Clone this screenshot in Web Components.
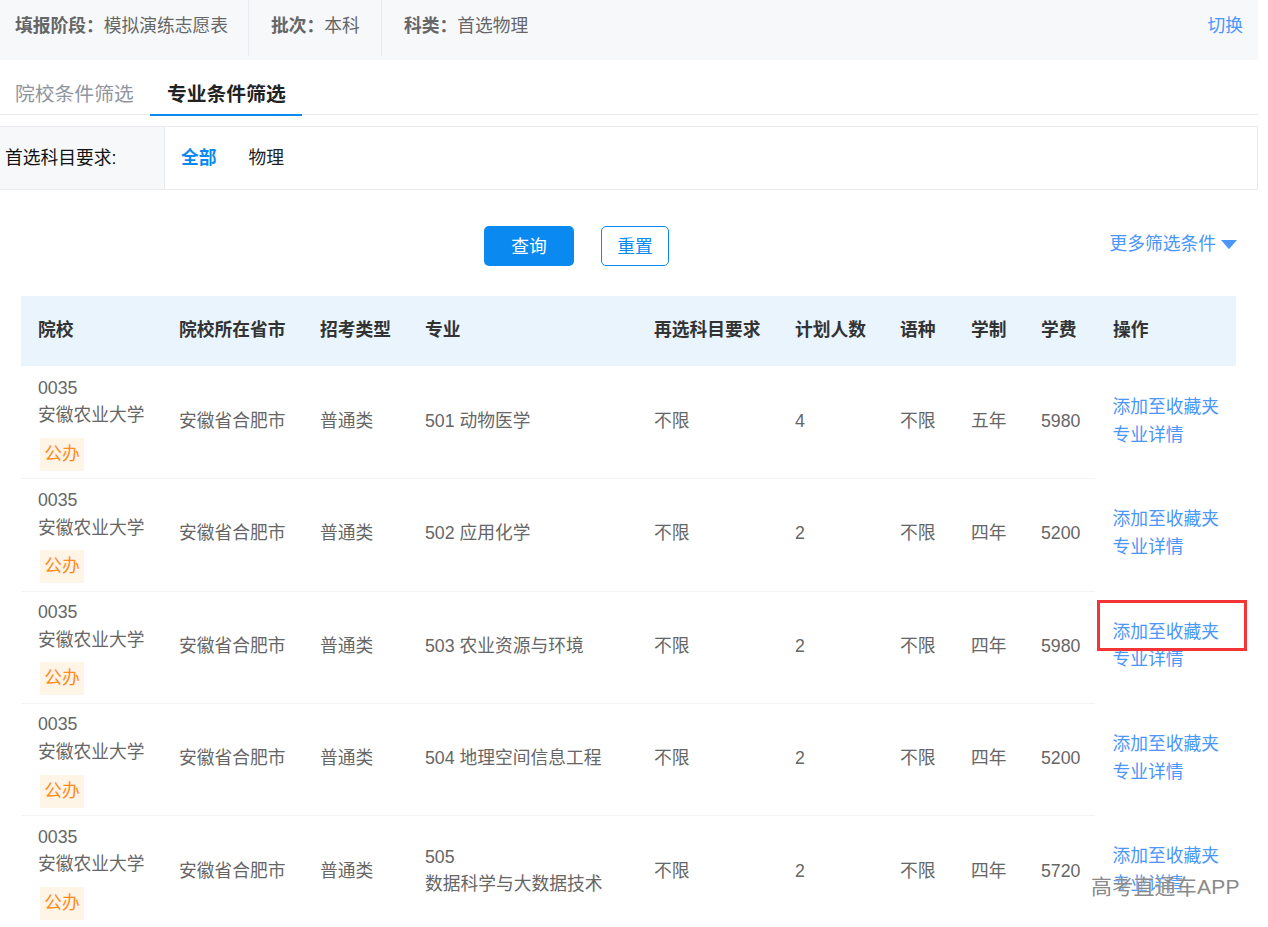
<!DOCTYPE html>
<html lang="zh">
<head>
<meta charset="utf-8">
<title>专业条件筛选</title>
<style>
  html, body { margin: 0; background: #fff; }
  body {
    position: relative;
    height: 927px;
    overflow: hidden;
    font-family: "Liberation Sans", "Noto Sans CJK SC", sans-serif;
    font-size: 17.75px;
    color: #666;
  }
</style>
</head>
<body>
<stage-bar></stage-bar>
<filter-tabs></filter-tabs>
<filter-row></filter-row>
<action-bar></action-bar>
<result-table></result-table>
<mark-box></mark-box>
<water-mark>高考直通车APP</water-mark>

<script>
const BLUE = '#0a8af0'
const LINK = '#4a96fa'

class StageBar extends HTMLElement {
  constructor() {
    super()
    this.attachShadow({ mode: 'open' })
    this.shadowRoot.innerHTML = `
      <style>
        :host { display: flex; width: 1258px; height: 60px; background: #f6f8fa; align-items: flex-start; }
        .item { display: flex; align-items: center; box-sizing: border-box; width: 249px; padding: 0 0 8px 15px; border-right: 1px solid #e8eaed; height: 56px; }
        .item + .item { width: 133px; padding-left: 22px; }
        .item.last { width: auto; border: 0; }
        b { color: #666; }
        a { margin-left: auto; margin-right: 15px; color: ${LINK}; line-height: 52px; }
      </style>
      <div class="item"><b>填报阶段：</b>模拟演练志愿表</div>
      <div class="item"><b>批次：</b>本科</div>
      <div class="item last"><b>科类：</b>首选物理</div>
      <a>切换</a>`
  }
}

class FilterTabs extends HTMLElement {
  constructor() {
    super()
    this.attachShadow({ mode: 'open' })
    this.shadowRoot.innerHTML = `
      <style>
        :host { display: flex; width: 1258px; height: 55px; box-sizing: border-box; border-bottom: 1px solid #e8eaed; font-size: 19.8px; }
        div { height: 56px; box-sizing: border-box; line-height: 68px; color: #8f959e; }
        .first { width: 150px; padding-left: 15px; }
        .on { width: 152px; color: #222; font-weight: bold; border-bottom: 2px solid ${BLUE}; padding-left: 17px; }
      </style>
      <div class="first">院校条件筛选</div>
      <div class="on">专业条件筛选</div>`
  }
}

class FilterRow extends HTMLElement {
  constructor() {
    super()
    this.attachShadow({ mode: 'open' })
    this.shadowRoot.innerHTML = `
      <style>
        :host { display: flex; width: 1258px; height: 64px; box-sizing: border-box; margin-top: 11px; border: 1px solid #e8eaed; border-left: 0; align-items: center; color: #222; }
        .label { width: 165px; height: 100%; box-sizing: border-box; background: #f6f8fa; border-right: 1px solid #e8eaed; padding-left: 5px; line-height: 62px; color: #111; }
        .opt { margin-left: 32px; margin-bottom: 4px; }
        .opt.on { margin-left: 16px; color: ${BLUE}; font-weight: bold; }
      </style>
      <div class="label">首选科目要求:</div>
      <span class="opt on">全部</span>
      <span class="opt">物理</span>`
  }
}

class ActionBar extends HTMLElement {
  constructor() {
    super()
    this.attachShadow({ mode: 'open' })
    this.shadowRoot.innerHTML = `
      <style>
        :host { display: flex; width: 1237px; height: 40px; margin-top: 36px; box-sizing: border-box; padding-left: 484px; align-items: flex-start; }
        button { font: inherit; box-sizing: border-box; height: 40px; border-radius: 5px; padding: 0 0 3px; cursor: pointer; }
        .go { width: 90px; background: ${BLUE}; border: 0; color: #fff; }
        .reset { width: 68px; margin-left: 27px; background: #fff; border: 1px solid ${BLUE}; color: ${BLUE}; }
        a { margin-left: auto; color: ${LINK}; display: flex; align-items: center; gap: 5px; line-height: 36px; }
        svg { display: block; }
      </style>
      <button class="go">查询</button>
      <button class="reset">重置</button>
      <a>更多筛选条件<svg width="16" height="9" viewBox="0 0 16 9"><path d="M0 0h16L8.6 8.6a.8.8 0 0 1-1.2 0z" fill="${LINK}"/></svg></a>`
  }
}

const COLUMNS = '140px 141px 105px 229px 141px 105px 71px 70px 72px 141px'

class ResultRow extends HTMLElement {
  connectedCallback() {
    const get = name => this.getAttribute(name)
    const major = get('code').split('|').join('<br>')
    this.attachShadow({ mode: 'open' })
    this.shadowRoot.innerHTML = `
      <style>
        :host { display: grid; grid-template-columns: ${COLUMNS}; height: 112.25px; line-height: 27.7px; }
        .c { display: flex; flex-direction: column; justify-content: center; padding: 0 0 .4px 18px; box-sizing: border-box; border-bottom: 1px solid #f2f3f6; margin-bottom: -1px; }
        :host(:last-child) .c { border-bottom: 0; }
        .school { justify-content: flex-start; padding: 8.6px 0 0 17px; }
        .ops { border-bottom: 0; color: ${LINK}; padding-left: 17.5px; margin-bottom: 0; }
        .tag { display: block; width: 44px; height: 33px; margin: 7.9px 0 0 2px; background: #fff5e6; color: #ff8a1f; text-align: center; line-height: 33px; }
      </style>
      <div class="c school">0035<br>
        <span>安徽农业大学</span>
        <span class="tag">公办</span>
      </div>
      <div class="c">安徽省合肥市</div>
      <div class="c">普通类</div>
      <div class="c">${major}</div>
      <div class="c">不限</div>
      <div class="c">${get('plan')}</div>
      <div class="c">不限</div>
      <div class="c">${get('years')}</div>
      <div class="c">${get('fee')}</div>
      <div class="c ops"><a>添加至收藏夹</a><a>专业详情</a></div>`
  }
}

class ResultTable extends HTMLElement {
  constructor() {
    super()
    this.attachShadow({ mode: 'open' })
    const heads = ['院校', '院校所在省市', '招考类型', '专业', '再选科目要求', '计划人数', '语种', '学制', '学费', '操作']
    const rows = [
      ['501 动物医学', 4, '五年', 5980],
      ['502 应用化学', 2, '四年', 5200],
      ['503 农业资源与环境', 2, '四年', 5980],
      ['504 地理空间信息工程', 2, '四年', 5200],
      ['505|数据科学与大数据技术', 2, '四年', 5720]
    ]
    this.shadowRoot.innerHTML = `
      <style>
        :host { display: block; width: 1215px; margin: 30px 0 0 21px; }
        .head { display: grid; grid-template-columns: ${COLUMNS}; height: 70px; background: #e9f4fd; align-items: center; color: #333; font-weight: bold; }
        .head div { padding: 0 0 6px 18px; }
        .head div:first-child { padding-left: 17px; }
      </style>
      <div class="head">${heads.map(h => `<div>${h}</div>`).join('')}</div>
      ${rows.map(r => `<result-row code="${r[0]}" plan="${r[1]}" years="${r[2]}" fee="${r[3]}"></result-row>`).join('')}`
  }
}

class MarkBox extends HTMLElement {
  constructor() {
    super()
    this.attachShadow({ mode: 'open' })
    this.shadowRoot.innerHTML = `
      <style>
        :host { position: absolute; left: 1097px; top: 600px; width: 150px; height: 51px; box-sizing: border-box; border: 3px solid #f43535; }
      </style>`
  }
}

class WaterMark extends HTMLElement {
  constructor() {
    super()
    this.attachShadow({ mode: 'open' })
    this.shadowRoot.innerHTML = `
      <style>
        :host { position: absolute; left: 1091px; top: 872px; font-size: 21px; line-height: 30px; color: #8a8a8a; text-shadow: 0 0 2px #fff; white-space: nowrap; letter-spacing: .2px; }
      </style>
      <slot></slot>`
  }
}

customElements.define('stage-bar', StageBar)
customElements.define('filter-tabs', FilterTabs)
customElements.define('filter-row', FilterRow)
customElements.define('action-bar', ActionBar)
customElements.define('result-row', ResultRow)
customElements.define('result-table', ResultTable)
customElements.define('mark-box', MarkBox)
customElements.define('water-mark', WaterMark)
</script>
</body>
</html>
